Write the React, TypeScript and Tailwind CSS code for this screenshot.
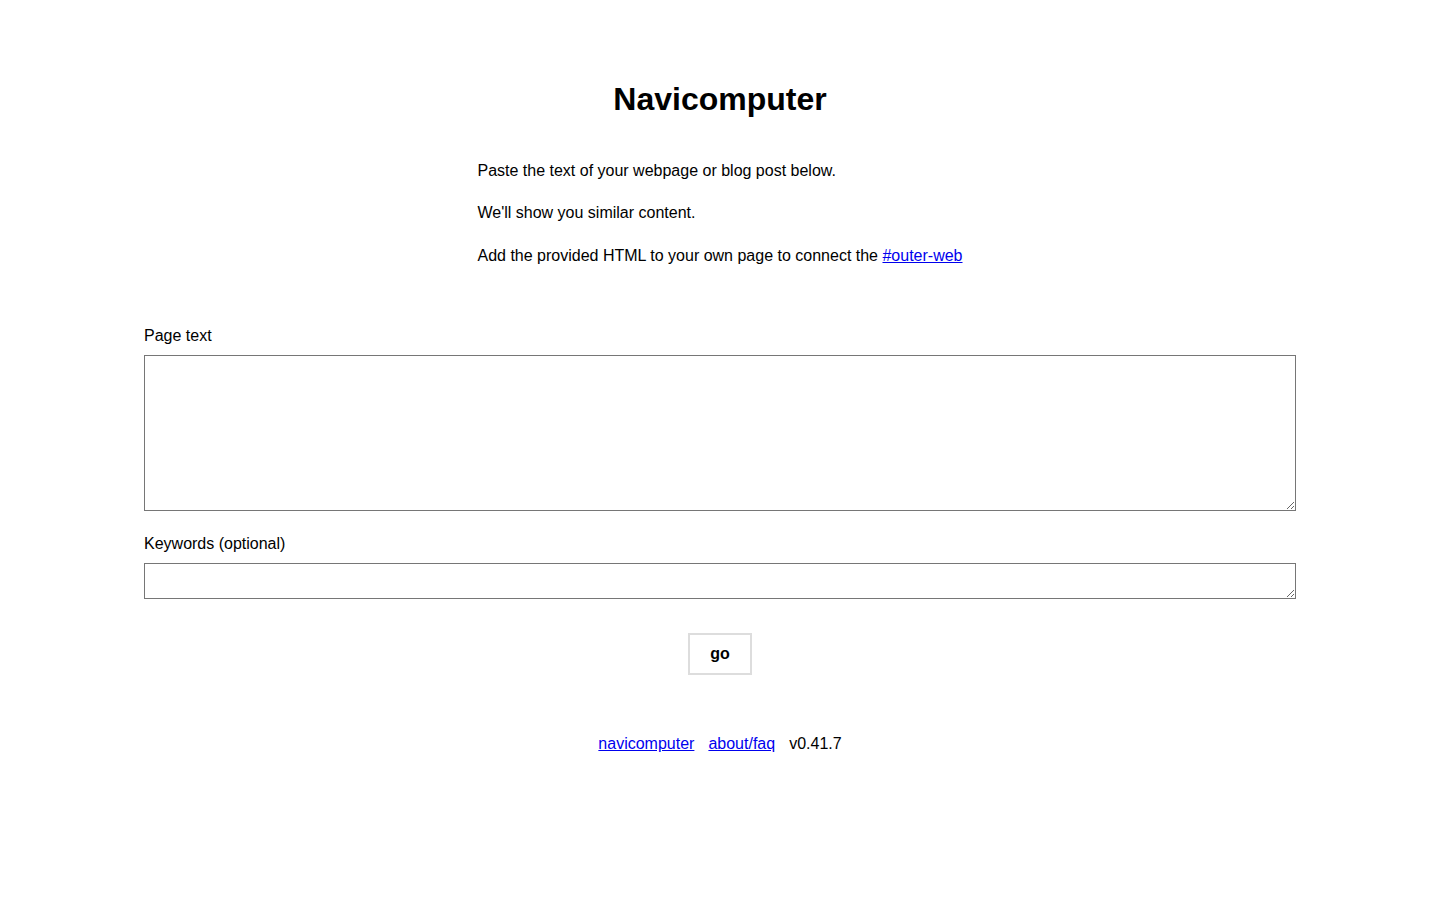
export default function App() {
  return (
    <div className="min-h-screen bg-white text-black font-['Liberation_Sans',Arial,sans-serif]">
      <div className="pt-[81px]">
        <h1 className="text-center text-[32px] leading-[37px] font-bold">Navicomputer</h1>

        {/* intro */}
        <div className="mx-auto w-fit mt-[40px] text-[16px] leading-[26.4px]">
          <p className="mb-[16px]">Paste the text of your webpage or blog post below.</p>
          <p className="mb-[16px]">We'll show you similar content.</p>
          <p>
            Add the provided HTML to your own page to connect the{' '}
            <a href="#" className="text-[#0000ee] underline">#outer-web</a>
          </p>
        </div>

        {/* form */}
        <form className="w-[1152px] mx-auto mt-[58px] text-[16px]" onSubmit={e => e.preventDefault()}>
          <label className="block leading-[18px] mb-[10px]">Page text</label>
          <textarea className="block w-full h-[156px] border border-[#767676] rounded-none bg-white resize-y" />
          <label className="block leading-[18px] mt-[24px] mb-[10px]">Keywords (optional)</label>
          <textarea className="block w-full h-[36px] border border-[#767676] rounded-none bg-white resize-y" />
          <div className="flex justify-center mt-[34px]">
            <button type="submit" className="w-[64px] h-[42px] border-2 border-[#dddddd] bg-white font-bold text-[16px] leading-[18px]">
              go
            </button>
          </div>
        </form>

        {/* footer */}
        <div className="flex justify-center gap-[14px] mt-[60px] text-[16px] leading-[18px]">
          <a href="#" className="text-[#0000ee] underline">navicomputer</a>
          <a href="#" className="text-[#0000ee] underline">about/faq</a>
          <span>v0.41.7</span>
        </div>
      </div>
    </div>
  )
}
